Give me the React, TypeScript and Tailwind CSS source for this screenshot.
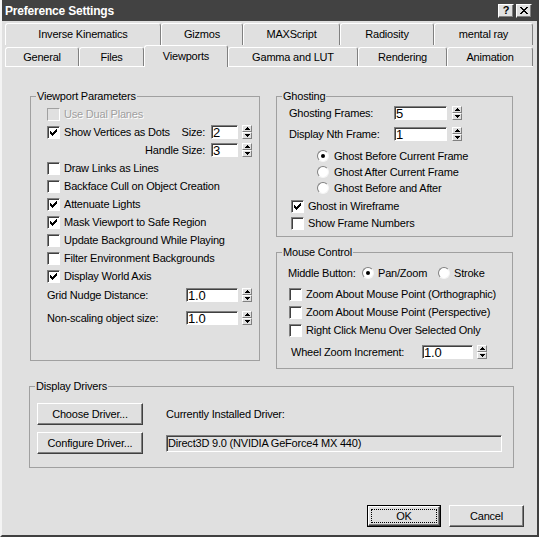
import React from 'react';

type Kids = { children?: React.ReactNode };

// classic 3D bevels
const raised =
  'border border-t-white border-l-white border-r-[#404040] border-b-[#404040] shadow-[inset_-1px_-1px_0_#808080]';
const sunken =
  'border border-t-[#808080] border-l-[#808080] border-r-white border-b-white shadow-[inset_1px_1px_0_#404040]';

function Tick() {
  return (
    <svg width="7" height="7" viewBox="0 0 7 7" shapeRendering="crispEdges">
      <path
        d="M6 0h1v1H6zM5 1h2v1H5zM0 2h1v1H0zM4 2h3v1H4zM0 3h2v1H0zM3 3h3v1H3zM0 4h5v1H0zM1 5h3v1H1zM2 6h1v1H2z"
        fill="#000"
      />
    </svg>
  );
}

function Arrow({ up }: { up?: boolean }) {
  return (
    <svg width="5" height="3" viewBox="0 0 5 3" shapeRendering="crispEdges">
      <path d={up ? 'M2 0h1v1H2zM1 1h3v1H1zM0 2h5v1H0z' : 'M0 0h5v1H0zM1 1h3v1H1zM2 2h1v1H2z'} fill="#000" />
    </svg>
  );
}

function Check({
  label,
  checked = false,
  disabled = false,
  className = '',
}: {
  label: string;
  checked?: boolean;
  disabled?: boolean;
  className?: string;
}) {
  const box = disabled
    ? 'bg-[#e0e0e0] border border-t-[#a0a0a0] border-l-[#a0a0a0] border-r-white border-b-white'
    : `bg-white ${sunken}`;
  return (
    <div className={`flex items-center ${className}`}>
      <span className={`w-[13px] h-[13px] flex items-center justify-center ${box}`}>{checked && <Tick />}</span>
      <span className={`ml-[4px] ${disabled ? 'text-[#a0a0a0] [text-shadow:1px_1px_0_#fff]' : ''}`}>{label}</span>
    </div>
  );
}

function Radio({ label, on = false, gap = 'ml-[5px]' }: { label: string; on?: boolean; gap?: string }) {
  return (
    <div className="flex items-center">
      <span className="w-[12px] h-[12px] rounded-full bg-white border border-t-[#808080] border-l-[#808080] border-r-[#f4f4f4] border-b-[#f4f4f4] flex items-center justify-center">
        {on && <span className="w-[4px] h-[4px] rounded-full bg-black" />}
      </span>
      <span className={gap}>{label}</span>
    </div>
  );
}

function Spin({ value, width, gap = 'ml-[4px]' }: { value: string; width: string; gap?: string }) {
  const half =
    'h-[7px] flex items-center justify-center border border-t-white border-l-white border-r-[#808080] border-b-[#808080]';
  return (
    <div className="flex items-center">
      <div className={`${width} h-[14px] bg-white ${sunken} pl-[1px] flex items-center text-[13px] leading-none`}>
        {value}
      </div>
      <div className={`${gap} w-[10px] h-[14px] flex flex-col`}>
        <span className={half}>
          <Arrow up />
        </span>
        <span className={half}>
          <Arrow />
        </span>
      </div>
    </div>
  );
}

function Group({ title, className, children }: Kids & { title: string; className: string }) {
  return (
    <fieldset className={`border border-[#a0a0a0] ${className}`}>
      <legend className="ml-[5px] px-[1px] leading-[13px]">{title}</legend>
      {children}
    </fieldset>
  );
}

function PushButton({ label, className }: { label: string; className: string }) {
  return <div className={`${className} h-[22px] flex items-center justify-center ${raised}`}>{label}</div>;
}

function CaptionButton({ children, className = '' }: Kids & { className?: string }) {
  return (
    <div
      className={`w-[16px] h-[14px] bg-[#e0e0e0] ${raised} flex items-center justify-center text-black font-bold text-[11px] leading-none ${className}`}
    >
      {children}
    </div>
  );
}

const topRow = [
  { label: 'Inverse Kinematics', w: 'w-[156px]' },
  { label: 'Gizmos', w: 'w-[82px]' },
  { label: 'MAXScript', w: 'w-[97px]' },
  { label: 'Radiosity', w: 'w-[94px]' },
  { label: 'mental ray', w: 'w-[99px]' },
];

const bottomRow = [
  { label: 'General', w: 'w-[74px]' },
  { label: 'Files', w: 'w-[65px]' },
  { label: 'Viewports', w: 'w-[84px]', active: true },
  { label: 'Gamma and LUT', w: 'w-[130px]' },
  { label: 'Rendering', w: 'w-[89px]' },
  { label: 'Animation', w: 'w-[86px]' },
];

const tabEdge = 'flex items-center justify-center border-t border-l border-r border-t-white border-l-white border-r-[#808080] rounded-t-[3px]';

function Tabs() {
  return (
    <div className="ml-[3px] w-[528px] mt-[2px]">
      <div className="flex h-[22px]">
        {topRow.map((t) => (
          <div key={t.label} className={`${t.w} h-[22px] ${tabEdge}`}>
            {t.label}
          </div>
        ))}
      </div>
      <div className="flex items-start h-[21px]">
        {bottomRow.map((t) => (
          <div
            key={t.label}
            className={`${t.w} ${t.active ? 'h-[22px] relative z-10 bg-[#e0e0e0]' : 'h-[19px] mt-[2px]'} ${tabEdge}`}
          >
            {t.label}
          </div>
        ))}
      </div>
    </div>
  );
}

function ViewportParameters() {
  return (
    <Group title="Viewport Parameters" className="w-[230px] h-[271px]">
      <div className="pl-[16px] pr-[7px] pt-[2px] flex flex-col">
        <Check className="h-[18px]" label="Use Dual Planes" disabled />
        <div className="flex items-center h-[18px]">
          <Check label="Show Vertices as Dots" checked />
          <span className="ml-auto">Size:</span>
          <div className="ml-[6px]">
            <Spin value="2" width="w-[27px]" />
          </div>
        </div>
        <div className="flex items-center justify-end h-[18px]">
          <span>Handle Size:</span>
          <div className="ml-[6px]">
            <Spin value="3" width="w-[27px]" />
          </div>
        </div>
        <Check className="h-[18px]" label="Draw Links as Lines" />
        <Check className="h-[18px]" label="Backface Cull on Object Creation" />
        <Check className="h-[18px]" label="Attenuate Lights" checked />
        <Check className="h-[18px]" label="Mask Viewport to Safe Region" checked />
        <Check className="h-[18px]" label="Update Background While Playing" />
        <Check className="h-[18px]" label="Filter Environment Backgrounds" />
        <Check className="h-[18px]" label="Display World Axis" checked />
        <div className="flex items-center h-[20px]">
          <span>Grid Nudge Distance:</span>
          <div className="ml-auto">
            <Spin value="1.0" width="w-[52px]" />
          </div>
        </div>
        <div className="flex items-center h-[18px] mt-[4px]">
          <span>Non-scaling object size:</span>
          <div className="ml-auto">
            <Spin value="1.0" width="w-[52px]" />
          </div>
        </div>
      </div>
    </Group>
  );
}

function Ghosting() {
  return (
    <Group title="Ghosting" className="w-[237px] h-[147px]">
      <div className="pt-[1px] flex flex-col">
        <div className="flex items-center h-[18px] pl-[12px]">
          <span className="w-[105px]">Ghosting Frames:</span>
          <Spin value="5" width="w-[53px]" gap="ml-[5px]" />
        </div>
        <div className="flex items-center h-[18px] pl-[12px] mt-[3px]">
          <span className="w-[105px]">Display Nth Frame:</span>
          <Spin value="1" width="w-[53px]" gap="ml-[5px]" />
        </div>
        <div className="pl-[40px] mt-[5px] flex flex-col">
          <div className="h-[16px] flex items-center">
            <Radio label="Ghost Before Current Frame" on />
          </div>
          <div className="h-[16px] flex items-center">
            <Radio label="Ghost After Current Frame" />
          </div>
          <div className="h-[16px] flex items-center">
            <Radio label="Ghost Before and After" />
          </div>
        </div>
        <div className="pl-[14px] mt-[2px] flex flex-col">
          <Check className="h-[17px]" label="Ghost in Wireframe" checked />
          <Check className="h-[17px]" label="Show Frame Numbers" />
        </div>
      </div>
    </Group>
  );
}

function MouseControl() {
  return (
    <Group title="Mouse Control" className="w-[237px] h-[123px] mt-[9px]">
      <div className="pt-[5px] flex flex-col">
        <div className="flex items-center h-[18px] pl-[11px]">
          <span className="w-[74px]">Middle Button:</span>
          <div className="w-[76px]">
            <Radio label="Pan/Zoom" on gap="ml-[4px]" />
          </div>
          <Radio label="Stroke" gap="ml-[4px]" />
        </div>
        <div className="pl-[12px] mt-[3px] flex flex-col">
          <Check className="h-[18px]" label="Zoom About Mouse Point (Orthographic)" />
          <Check className="h-[18px]" label="Zoom About Mouse Point (Perspective)" />
          <Check className="h-[18px]" label="Right Click Menu Over Selected Only" />
        </div>
        <div className="flex items-center h-[18px] pl-[14px] mt-[4px]">
          <span className="w-[131px]">Wheel Zoom Increment:</span>
          <Spin value="1.0" width="w-[51px]" />
        </div>
      </div>
    </Group>
  );
}

function DisplayDrivers() {
  return (
    <Group title="Display Drivers" className="w-[485px] h-[88px] mt-[11px] -ml-[1px]">
      <div className="pl-[7px] pt-[10px] flex flex-col">
        <div className="flex items-center">
          <PushButton label="Choose Driver..." className="w-[106px]" />
          <span className="ml-[23px]">Currently Installed Driver:</span>
        </div>
        <div className="flex items-center mt-[7px]">
          <PushButton label="Configure Driver..." className="w-[106px]" />
          <div className={`ml-[23px] w-[336px] h-[17px] ${sunken} pl-[1px] flex items-center`}>
            Direct3D 9.0 (NVIDIA GeForce4 MX 440)
          </div>
        </div>
      </div>
    </Group>
  );
}

export default function App() {
  return (
    <div className="w-[539px] h-[537px] font-['Liberation_Sans',Arial,sans-serif] text-[11px] tracking-[-0.2px] text-black bg-[#e0e0e0] flex flex-col border-l-2 border-l-[#f4f4f4] border-r-2 border-r-[#404040] border-b-2 border-b-[#404040]">
      <div className="h-[21px] shrink-0 bg-[#424242] flex items-center pl-[3px] pr-[5px] text-white">
        <span className="font-bold text-[12px]">Preference Settings</span>
        <div className="ml-auto flex">
          <CaptionButton>?</CaptionButton>
          <CaptionButton className="ml-[2px]">
            <svg width="8" height="7" viewBox="0 0 8 7" shapeRendering="crispEdges">
              <path
                d="M0 0h2v1H0zM6 0h2v1H6zM1 1h2v1H1zM5 1h2v1H5zM2 2h4v1H2zM3 3h2v1H3zM2 4h4v1H2zM1 5h2v1H1zM5 5h2v1H5zM0 6h2v1H0zM6 6h2v1H6z"
                fill="#000"
              />
            </svg>
          </CaptionButton>
        </div>
      </div>

      <Tabs />

      {/* tab page: only the top edge shows against the dialog face */}
      <div className="ml-[3px] w-[528px] h-[426px] shrink-0 border-t border-t-white pl-[25px] pt-[23px]">
        <div className="flex items-start">
          <ViewportParameters />
          <div className="ml-[16px] flex flex-col">
            <Ghosting />
            <MouseControl />
          </div>
        </div>
        <DisplayDrivers />
      </div>

      <div className="flex justify-end pr-[13px] mt-[13px] gap-[8px]">
        <div className="w-[74px] h-[22px] border border-black">
          <div className={`w-full h-full ${raised} p-[2px]`}>
            <div className="w-full h-full border border-dotted border-black flex items-center justify-center">OK</div>
          </div>
        </div>
        <PushButton label="Cancel" className="w-[75px]" />
      </div>
    </div>
  );
}
